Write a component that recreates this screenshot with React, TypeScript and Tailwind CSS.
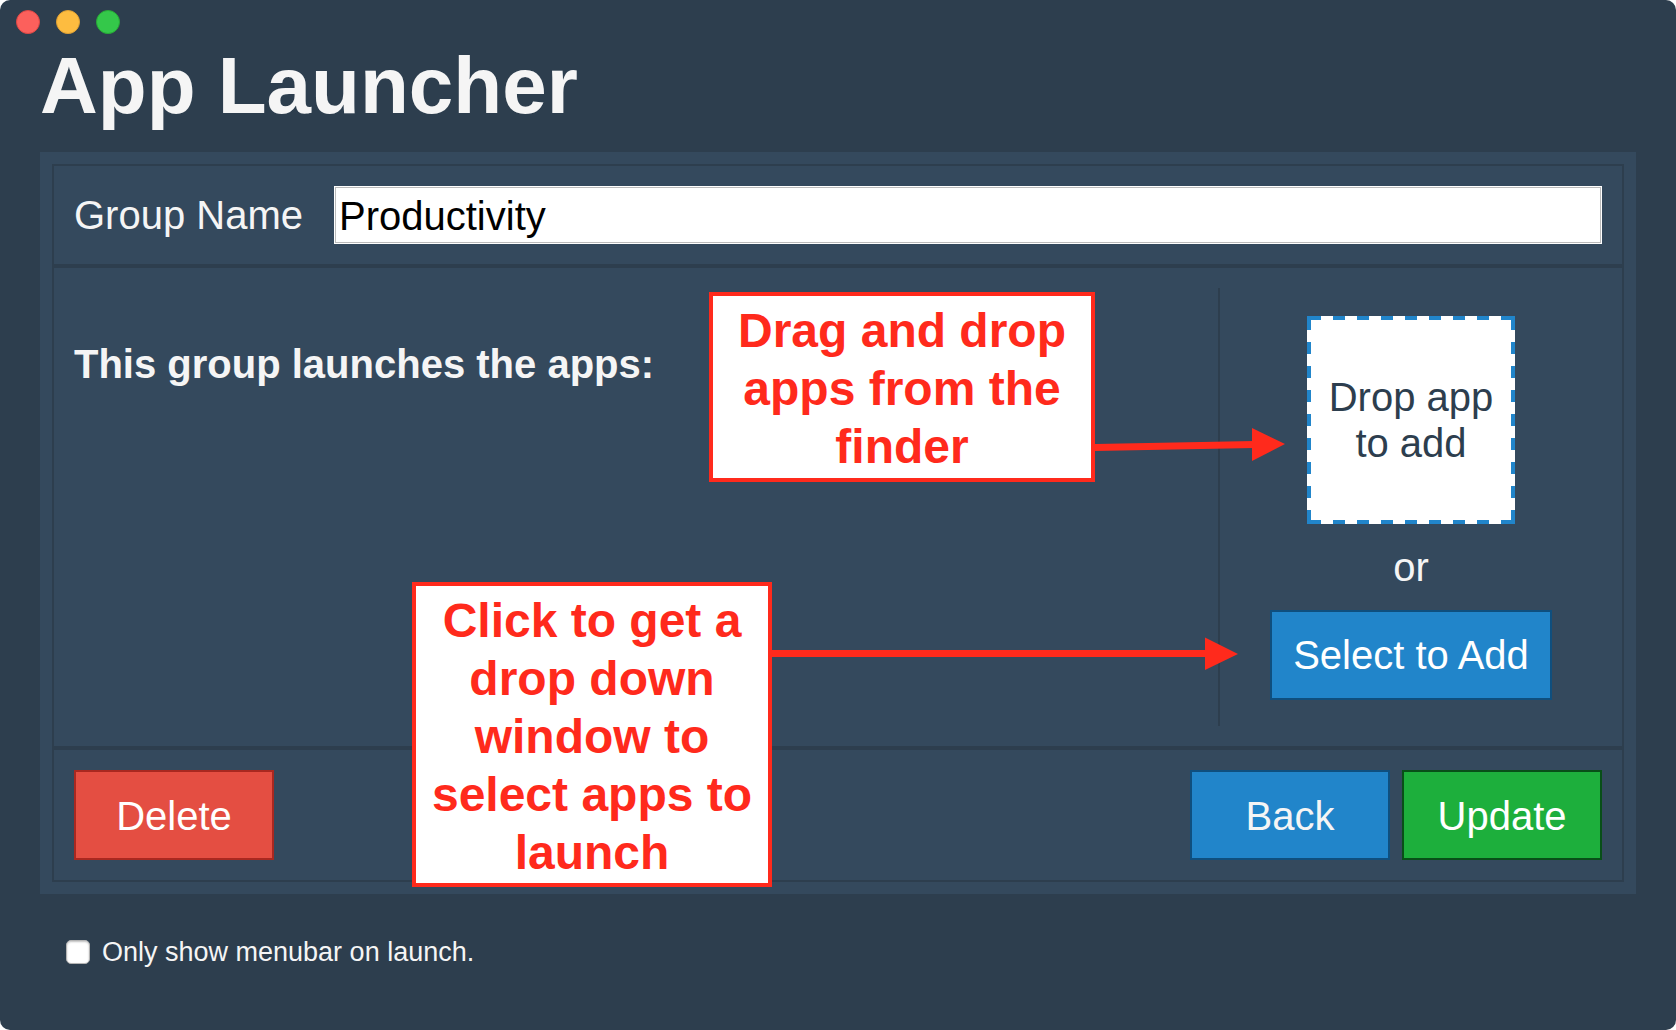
import { useState } from "react";
import type { ReactNode } from "react";

function WindowControls() {
  return (
    <div className="flex gap-4 px-4 pt-2.5">
      <button aria-label="Close" className="size-6 rounded-full border border-[#df4744] bg-[#fc605c]" />
      <button aria-label="Minimize" className="size-6 rounded-full border border-[#dfa033] bg-[#fdbc40]" />
      <button aria-label="Zoom" className="size-6 rounded-full border border-[#27ab35] bg-[#34c84a]" />
    </div>
  );
}

const DASHES = "14 12 12 12 12 12 12 12 12 12 12 12 12 12 12 12 14 12";

function DropZone() {
  return (
    <div className="relative flex size-[208px] items-center justify-center bg-white px-4 text-center text-[#2d3e4e]">
      <svg
        className="pointer-events-none absolute inset-0"
        width="208"
        height="208"
        viewBox="0 0 208 208"
        stroke="#2185ca"
        strokeWidth="4"
        strokeDasharray={DASHES}
        aria-hidden="true"
      >
        <line x1="0" y1="2" x2="208" y2="2" />
        <line x1="0" y1="206" x2="208" y2="206" />
        <line x1="2" y1="0" x2="2" y2="208" />
        <line x1="206" y1="0" x2="206" y2="208" />
      </svg>
      <p>
        Drop app
        <br />
        to add
      </p>
    </div>
  );
}

function Note({ className, children }: { className: string; children: ReactNode }) {
  return (
    <div
      className={`shrink-0 border-4 border-[#ff2a1c] bg-white text-center text-[48px] leading-[58px] font-bold text-[#ff2a1c] ${className}`}
    >
      {children}
    </div>
  );
}

export default function App() {
  const [name, setName] = useState("Productivity");
  const [menubarOnly, setMenubarOnly] = useState(false);

  return (
    <div className="min-h-screen bg-white font-['Liberation_Sans',Arial,sans-serif]">
      <div className="min-h-screen rounded-[10px] bg-[#2d3e4e] text-[#f5f5f5]">
        <WindowControls />
        <main className="px-10 pb-8">
          <h1 className="mt-2 mb-[22px] text-[80px] leading-[88px] font-bold">App Launcher</h1>

          <div className="bg-[#34495d] p-3 text-[40px] leading-[46px]">
            <section className="flex items-center border-2 border-[#2d3e4e] p-5">
              <label htmlFor="group-name" className="w-[260px] shrink-0">
                Group Name
              </label>
              <input
                id="group-name"
                type="text"
                value={name}
                onChange={(e) => setName(e.target.value)}
                className="h-[58px] min-w-0 flex-1 border border-white bg-white px-1 pt-0.5 text-black shadow-[inset_0_0_0_1px_#bbbbbb] outline-none"
              />
            </section>

            <section className="relative flex border-2 border-[#2d3e4e] p-5">
              <div className="flex-1">
                <h2 className="mt-[53px] font-bold">This group launches the apps:</h2>
              </div>
              <div className="flex w-[384px] flex-col items-center border-l-2 border-[#2d3e4e] pt-7 pb-[26px]">
                <DropZone />
                <p className="my-5">or</p>
                <button className="h-[90px] w-[282px] border-2 border-[#0f4f7e] bg-[#2185ca] text-white">
                  Select to Add
                </button>
              </div>

              <div className="pointer-events-none absolute top-6 right-[337px] z-10 flex">
                <Note className="w-[386px] pt-1.5 pb-0.5">
                  Drag and drop
                  <br />
                  apps from the
                  <br />
                  finder
                </Note>
                <svg width="190" height="190" viewBox="0 0 190 190" fill="#ff2a1c" aria-hidden="true">
                  <line x1="0" y1="155.5" x2="159" y2="152.5" stroke="#ff2a1c" strokeWidth="7" />
                  <path d="M157 136L190 152L157 169Z" />
                </svg>
              </div>

              <div className="pointer-events-none absolute top-[314px] right-[384px] z-10 flex">
                <Note className="w-[360px] pt-1.5 pb-px">
                  Click to get a
                  <br />
                  drop down
                  <br />
                  window to
                  <br />
                  select apps to
                  <br />
                  launch
                </Note>
                <svg width="466" height="305" viewBox="0 0 466 305" fill="#ff2a1c" aria-hidden="true">
                  <line x1="0" y1="71.5" x2="435" y2="71.5" stroke="#ff2a1c" strokeWidth="7" />
                  <path d="M433 55.5L466 72L433 88Z" />
                </svg>
              </div>
            </section>

            <section className="flex gap-3 border-2 border-[#2d3e4e] p-5 text-white">
              <button className="mr-auto h-[90px] w-[200px] border-2 border-[#a92820] bg-[#e44e42] pt-0.5">Delete</button>
              <button className="h-[90px] w-[200px] border-2 border-[#0f4f7e] bg-[#2185ca] pt-0.5 text-[#f5f5f5]">Back</button>
              <button className="h-[90px] w-[200px] border-2 border-[#084f18] bg-[#1daf3c] pt-0.5">Update</button>
            </section>
          </div>

          <label className="mt-[42px] ml-[26px] flex w-fit items-center gap-3 text-[27px] leading-8">
            <input
              type="checkbox"
              checked={menubarOnly}
              onChange={(e) => setMenubarOnly(e.target.checked)}
              className="size-6 appearance-none rounded-[5px] border border-[#b4b4b4] bg-white shadow-[inset_0_1px_2px_rgba(0,0,0,0.25)] checked:bg-[#2185ca]"
            />
            Only show menubar on launch.
          </label>
        </main>
      </div>
    </div>
  );
}
